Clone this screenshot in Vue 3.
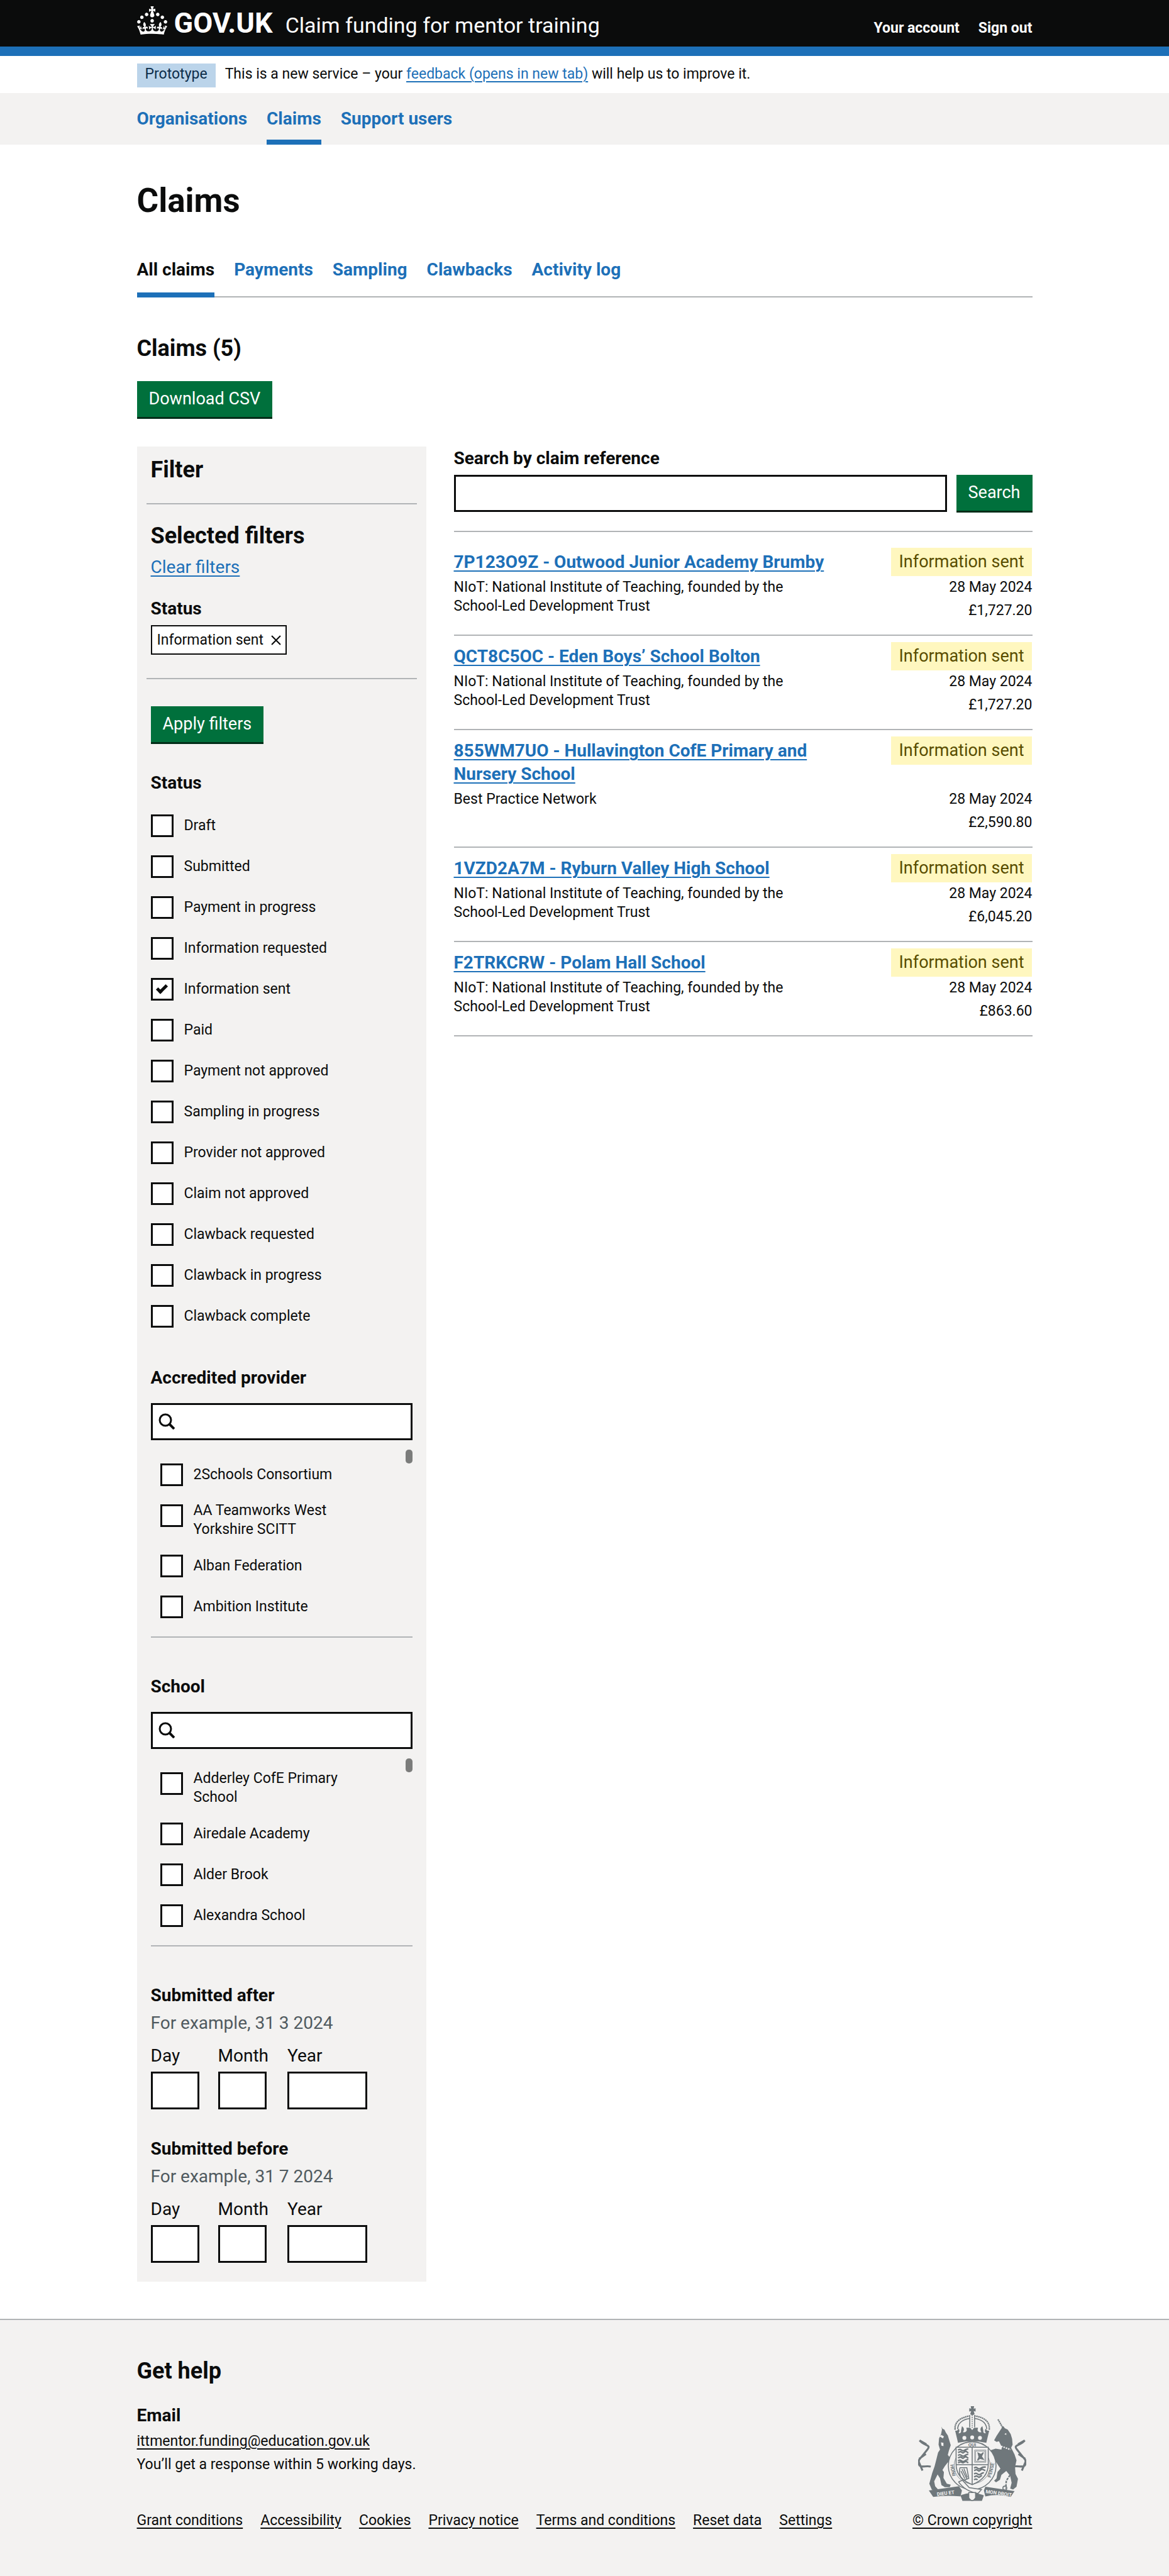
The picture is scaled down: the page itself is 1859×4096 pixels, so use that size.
<script setup>
import { ref } from 'vue'

const primaryLinks = [
  { text: 'Organisations' },
  { text: 'Claims', current: true },
  { text: 'Support users' },
]

const sections = [
  { text: 'All claims', current: true },
  { text: 'Payments' },
  { text: 'Sampling' },
  { text: 'Clawbacks' },
  { text: 'Activity log' },
]

const statuses = [
  'Draft',
  'Submitted',
  'Payment in progress',
  'Information requested',
  'Information sent',
  'Paid',
  'Payment not approved',
  'Sampling in progress',
  'Provider not approved',
  'Claim not approved',
  'Clawback requested',
  'Clawback in progress',
  'Clawback complete',
]
const selectedStatuses = ref(['Information sent'])

const searchableFilters = [
  {
    id: 'provider',
    title: 'Accredited provider',
    options: ['2Schools Consortium', 'AA Teamworks West Yorkshire SCITT', 'Alban Federation', 'Ambition Institute'],
  },
  {
    id: 'school',
    title: 'School',
    options: ['Adderley CofE Primary School', 'Airedale Academy', 'Alder Brook', 'Alexandra School'],
  },
]

const dateFilters = [
  { id: 'after', title: 'Submitted after', hint: 'For example, 31 3 2024' },
  { id: 'before', title: 'Submitted before', hint: 'For example, 31 7 2024' },
]
const dateParts = ['Day', 'Month', 'Year']

const niot = 'NIoT: National Institute of Teaching, founded by the School-Led Development Trust'
const claims = [
  { title: '7P123O9Z - Outwood Junior Academy Brumby', provider: niot, amount: '£1,727.20' },
  { title: 'QCT8C5OC - Eden Boys’ School Bolton', provider: niot, amount: '£1,727.20' },
  { title: '855WM7UO - Hullavington CofE Primary and Nursery School', provider: 'Best Practice Network', amount: '£2,590.80' },
  { title: '1VZD2A7M - Ryburn Valley High School', provider: niot, amount: '£6,045.20' },
  { title: 'F2TRKCRW - Polam Hall School', provider: niot, amount: '£863.60' },
]

const footerLinks = [
  'Grant conditions',
  'Accessibility',
  'Cookies',
  'Privacy notice',
  'Terms and conditions',
  'Reset data',
  'Settings',
]
</script>

<template>
  <div class="page">
    <header class="header">
      <div class="container header-row">
        <a href="#" class="logo">
          <svg class="crown" viewBox="0 0 32 30" fill="currentColor" aria-hidden="true">
            <path d="M22.6 10.4c-1 .4-2-.1-2.4-1-.4-.9.1-2 1-2.4.9-.4 2 .1 2.4 1s-.1 2-1 2.4m-5.9 6.7c-.9.4-2-.1-2.4-1-.4-.9.1-2 1-2.4.9-.4 2 .1 2.4 1s-.1 2-1 2.4m10.8-3.7c-1 .4-2-.1-2.4-1-.4-.9.1-2 1-2.4.9-.4 2 .1 2.4 1s0 2-1 2.4m3.3 4.8c-1 .4-2-.1-2.4-1-.4-.9.1-2 1-2.4.9-.4 2 .1 2.4 1s-.1 2-1 2.4M17 4.7l2.3 1.2V2.5l-2.3.7-.2-.2.9-3h-3.4l.9 3-.2.2c-.1.1-2.3-.7-2.3-.7v3.4L15 4.7c.1.1.1.2.2.2l-1.3 4c-.1.2-.1.4-.1.6 0 1.1.8 2 1.9 2.2h.7c1-.2 1.9-1.1 1.9-2.1 0-.2 0-.4-.1-.6l-1.3-4c-.1-.2 0-.2.1-.3m-7.6 5.7c.9.4 2-.1 2.4-1 .4-.9-.1-2-1-2.4-.9-.4-2 .1-2.4 1s0 2 1 2.4m-5 3c.9.4 2-.1 2.4-1 .4-.9-.1-2-1-2.4-.9-.4-2 .1-2.4 1s.1 2 1 2.4m-3.2 4.8c.9.4 2-.1 2.4-1 .4-.9-.1-2-1-2.4-.9-.4-2 .1-2.4 1s0 2 1 2.4m14.8 11c4.4 0 8.6.3 12.3.8 1.1-4.5 2.4-7 3.7-8.8l-2.5-.9c.2 1.3.3 1.9 0 2.7-.4-.4-.8-1.1-1.1-2.3l-1.2 4c.7-.5 1.3-.8 2-.9-1.1 2.5-2.6 3.1-3.5 3-1.1-.2-1.7-1.2-1.5-2.1.3-1.2 1.5-1.5 2.1-.1 1.1-2.3-.8-3-2-2.3 1.9-1.9 2.1-3.5.6-5.6-2.1 1.6-2.1 3.2-1.2 5.5-1.2-1.4-3.2-.6-2.5 1.6.9-1.4 2.1-.5 1.9.8-.2 1.1-1.7 2.1-3.5 1.9-2.7-.2-2.9-2.1-2.9-3.6.7-.1 1.9.5 2.9 1.9l.4-4.3c-1.1 1.1-2.1 1.4-3.2 1.4.4-1.2 2.1-3 2.1-3h-5.4s1.7 1.9 2.1 3c-1.1 0-2.1-.2-3.2-1.4l.4 4.3c1-1.4 2.2-2 2.9-1.9-.1 1.5-.2 3.4-2.9 3.6-1.9.2-3.4-.8-3.5-1.9-.2-1.3 1-2.2 1.9-.8.7-2.3-1.2-3-2.5-1.6.9-2.2.9-3.9-1.2-5.5-1.5 2-1.3 3.7.6 5.6-1.2-.7-3.1 0-2 2.3.6-1.4 1.8-1.1 2.1.1.2.9-.3 1.9-1.5 2.1-.9.2-2.4-.5-3.5-3 .6 0 1.2.3 2 .9l-1.2-4c-.3 1.1-.7 1.9-1.1 2.3-.3-.8-.2-1.4 0-2.7l-2.9.9C1.3 23 2.6 25.5 3.7 30c3.7-.5 7.9-.8 12.3-.8z" />
          </svg>
          <span class="logo-text">GOV.UK</span>
        </a>
        <a href="#" class="service">Claim funding for mentor training</a>
        <nav class="account" aria-label="Account">
          <a href="#">Your account</a>
          <a href="#">Sign out</a>
        </nav>
      </div>
    </header>

    <div class="container phase">
      <strong class="phase-tag">Prototype</strong>
      <span>This is a new service – your <a href="#" class="link">feedback (opens in new tab)</a> will help us to improve it.</span>
    </div>

    <nav class="primary" aria-label="Primary">
      <ul class="container tabs">
        <li v-for="link in primaryLinks" :key="link.text">
          <a href="#" class="tab primary-tab" :class="{ current: link.current }">{{ link.text }}</a>
        </li>
      </ul>
    </nav>

    <main class="container main">
      <h1>Claims</h1>

      <nav aria-label="Claims sections">
        <ul class="tabs sections">
          <li v-for="section in sections" :key="section.text">
            <a href="#" class="tab section-tab" :class="{ current: section.current }">{{ section.text }}</a>
          </li>
        </ul>
      </nav>

      <h2 class="heading count">Claims (5)</h2>
      <button type="button" class="button">Download CSV</button>

      <div class="columns">
        <form class="filter" @submit.prevent>
          <h2 class="heading">Filter</h2>

          <div class="selected">
            <h2 class="heading">Selected filters</h2>
            <a href="#" class="link clear">Clear filters</a>
            <h3 class="label selected-title">Status</h3>
            <a href="#" class="chip">
              Information sent
              <svg viewBox="0 0 15 15" class="cross" aria-hidden="true">
                <path d="M1 1 14 14M14 1 1 14" fill="none" stroke="currentColor" stroke-width="2" />
              </svg>
            </a>
          </div>

          <button type="submit" class="button">Apply filters</button>

          <fieldset class="group status-group">
            <legend class="label">Status</legend>
            <div class="options">
              <label v-for="status in statuses" :key="status" class="option">
                <input v-model="selectedStatuses" type="checkbox" :value="status" />
                <span>{{ status }}</span>
              </label>
            </div>
          </fieldset>

          <fieldset v-for="filter in searchableFilters" :key="filter.id" class="group search-group">
            <legend class="label">{{ filter.title }}</legend>
            <div class="search-box">
              <svg viewBox="0 0 26 26" class="magnifier" aria-hidden="true">
                <circle cx="11" cy="11" r="9" fill="none" stroke="currentColor" stroke-width="3" />
                <path d="m17 17 8 8" fill="none" stroke="currentColor" stroke-width="4" />
              </svg>
              <input type="search" class="input" :aria-label="`Search ${filter.title}`" />
            </div>
            <div class="scroller">
              <label v-for="option in filter.options" :key="option" class="option">
                <input type="checkbox" :value="option" />
                <span>{{ option }}</span>
              </label>
            </div>
          </fieldset>

          <fieldset v-for="date in dateFilters" :key="date.id" class="group date-group">
            <legend class="label">{{ date.title }}</legend>
            <p class="hint">{{ date.hint }}</p>
            <div class="date-fields">
              <div v-for="part in dateParts" :key="part">
                <label class="date-label" :for="`${date.id}-${part}`">{{ part }}</label>
                <input :id="`${date.id}-${part}`" type="text" inputmode="numeric" class="input date-input" :class="{ year: part === 'Year' }" />
              </div>
            </div>
          </fieldset>
        </form>

        <div class="results">
          <form @submit.prevent>
            <label class="label" for="reference">Search by claim reference</label>
            <div class="search-row">
              <input id="reference" type="text" class="input" />
              <button type="submit" class="button">Search</button>
            </div>
          </form>

          <ul class="claims">
            <li v-for="claim in claims" :key="claim.title" class="claim">
              <h3 class="claim-title"><a href="#" class="link">{{ claim.title }}</a></h3>
              <strong class="tag">Information sent</strong>
              <p class="provider">{{ claim.provider }}</p>
              <p class="figures">28 May 2024<br />{{ claim.amount }}</p>
            </li>
          </ul>
        </div>
      </div>
    </main>

    <footer class="footer">
      <div class="container footer-row">
        <div>
          <h2 class="heading">Get help</h2>
          <h3 class="label email">Email</h3>
          <p><a href="#">ittmentor.funding@education.gov.uk</a></p>
          <p>You’ll get a response within 5 working days.</p>
          <ul class="footer-links">
            <li v-for="link in footerLinks" :key="link"><a href="#">{{ link }}</a></li>
          </ul>
        </div>
        <div class="copyright">
          <svg class="arms" viewBox="0 0 222 196" aria-hidden="true">
            <g fill="currentColor">
              <path d="M108 0h7l-1 5 4-1v7l-4-1 2 6a6 6 0 0 1-9 0l2-6-4 1V4l4 1z" />
              <path d="M76 50c4 1 6-1 7-4 3 3 2 7 0 9 3 1 6-1 5-4l2-10c5 4 5 8 2 12 4 1 7 0 8-4l-1-5h8l4 5 4-5h8l-1 5c1 4 4 5 8 4-3-4-3-8 2-12l2 10c-1 3 2 5 5 4-2-2-3-6 0-9 1 3 3 5 7 4l-6 25q-29-6-58 0z" />
              <path d="M48 42l2 4 4 2 3 6 4 6 3 10 3 10-4 12-2 8 5 6 9 8 5 4-4 4-7-2-8-5-6 8-5 8 3 4-1 12 7 12 8 2-2 5h-10l-7-4-3-14-5-8-7 14 2 10 7 8-5 3-9-4-5-12 6-22 5-14 4-16 3-12 4-6-3-10 1-13 4-8 2-10z" />
              <path d="m172 44 3-3 3 4 6 3 6 9 3 10 1 12-3 6 7 14 4 12-3 14 1 14 5 10-3 16-7 6-6-2 3-12-3-14-8-10-10 8-3 10-8 5-4-3 5-5 2-13 6-7-10-15-8-12-8 1-1-4 8-8 9-3 12 2 1-5-6-12-5 1-5-3 5-9z" />
              <path d="m22 173 62-9 6 9-3 12q-30-3-56 1zM138 165l60 9-8 12q-26-7-52-1l-3-12z" />
              <path d="M87 183q24-10 48 0l-4 11H91z" />
            </g>
            <g fill="none" stroke="currentColor">
              <path d="M76 48C74 30 90 23 105 20M146 48c2-18-12-25-29-28" stroke-width="3" stroke-dasharray="3 1" />
              <path d="M81 47c1-14 11-20 25-22M141 47c-1-14-11-20-25-22M106 18v25M116 18v25" stroke-width="2" />
              <path d="M111 18v26" stroke-width="2" stroke-dasharray="2 2" />
              <path d="M26 124C14 120-2 132 2 110l17-21C28 78 12 82 3 70m0 0 14 8m-1 20-14 10m-1 5 8 19" stroke-width="4" />
              <path d="M195 124c12-4 29 8 25-14l-17-21c-9-11 7-7 16-19m0 0-14 8m1 20 14 10m1 5-8 19" stroke-width="4" />
              <path d="m164 27 11 19" stroke-width="3" stroke-dasharray="3 1" />
              <path d="m195 101 2 18-7 20-9 14-1 16" stroke-width="3" stroke-dasharray="5 2" />
              <circle cx="178" cy="168" r="4" stroke-width="2" />
            </g>
            <circle cx="111" cy="122" r="49" fill="#f3f2f1" stroke="currentColor" stroke-width="2" />
            <circle cx="111" cy="122" r="37" fill="none" stroke="currentColor" />
            <path d="M78 84h66v35q0 29-33 42-33-13-33-42z" fill="#f3f2f1" stroke="currentColor" stroke-width="2" />
            <g fill="none" stroke="currentColor">
              <path d="M111 84v76M78 120h66" stroke-width="2" />
              <path d="M82 90q4-3 7 0t7 0 7-2M82 95l5-2 5 3 6-4 5 4M82 101q4-3 7 0t7 0 7-2M82 106l5-2 5 3 6-4 5 4M82 112q4-3 7 0t7 0 7-2M82 116l5-2 5 2 6-3 5 3" stroke-width="3" />
              <path d="M116 90h23v25h-23zM118 92h19v21h-19z" />
              <path d="m123 96 6 3 5-4-4 8 4 6-7-2-5 4 3-7z" stroke-width="2" fill="currentColor" />
              <path d="M86 126h14l4 22-10 4q-12-8-8-26M90 129l10 20M94 128l7 18M88 133l8 16" stroke-width="2" />
              <path d="M115 127q4-3 7 0t7 0 10-2M115 132l5-2 5 3 6-4 7 3M115 139q4-3 7 0t7 0 6-2M115 145l5-2 5 3 6-4M115 151q4-3 7 0" stroke-width="3" />
            </g>
            <path d="m83 155 8-3 14 15 25 4-7 8q-28-5-40-24M104 177h14v11q-7 11-14 0z" fill="#f3f2f1" stroke="currentColor" stroke-width="2" />
            <g fill="#f3f2f1">
              <path d="m44 62 4-3 5 3-2 4zM47 74l5 1v7l-4-1zM177 57l4-2v4z" />
              <circle cx="95" cy="65" r="4" />
              <circle cx="111" cy="64" r="4" />
              <circle cx="127" cy="65" r="4" />
            </g>
            <path d="m161 79 12 4 17 6" fill="none" stroke="#f3f2f1" stroke-width="3" stroke-dasharray="3 2" />
            <g class="motto" text-anchor="middle">
              <text x="57" y="182" fill="#f3f2f1" transform="rotate(-7 57 182)">DIEU ET</text>
              <text x="165" y="182" fill="#f3f2f1" transform="rotate(8 165 182)">MON DROIT</text>
              <text x="111" y="82" fill="currentColor">QUI</text>
              <text x="68" y="132" fill="currentColor" transform="rotate(80 68 132)">HONI</text>
              <text x="153" y="132" fill="currentColor" transform="rotate(-76 153 132)">PENSE</text>
            </g>
          </svg>
          <a href="#">© Crown copyright</a>
        </div>
      </div>
    </footer>
  </div>
</template>

<style>
body {
  background: #fff;
}
</style>

<style scoped>
.page {
  color: #0b0c0c;
  font-family: Roboto, "Liberation Sans", sans-serif;
  font-size: 23px;
  line-height: 37px;
}

h1,
h2,
h3,
p,
ul,
fieldset {
  margin: 0;
  padding: 0;
}

ul {
  list-style: none;
}

a {
  color: inherit;
  text-decoration-thickness: 2px;
  text-underline-offset: 4px;
}

.container {
  box-sizing: border-box;
  max-width: 1424px;
  margin: 0 auto;
}

.link {
  color: #1d70b8;
}

.header {
  background: #0b0c0c;
  border-bottom: 15px solid #1d70b8;
  color: #fff;
}

.header a {
  text-decoration: none;
}

.header-row {
  display: flex;
  align-items: baseline;
}

.logo {
  display: flex;
  align-items: baseline;
  gap: 11px;
}

.crown {
  align-self: flex-start;
  width: 48px;
  height: 45px;
  margin-top: 10px;
}

.logo-text {
  font-size: 45px;
  font-weight: 700;
  line-height: 74px;
}

.service {
  margin-left: 20px;
  font-size: 34px;
}

.account {
  display: flex;
  gap: 30px;
  margin-left: auto;
  font-weight: 700;
}

.phase {
  display: flex;
  align-items: baseline;
  gap: 15px;
  padding: 12px 0 9px;
  line-height: 34px;
}

.phase-tag {
  padding: 0 13px 4px;
  background: #bbd4ea;
  color: #0c2d4a;
  font-weight: 400;
}

.primary {
  background: #f3f2f1;
}

.tabs {
  display: flex;
  gap: 31px;
  font-size: 28px;
  font-weight: 700;
}

.tab {
  display: block;
  border-bottom: 8px solid transparent;
  color: #1d70b8;
  text-decoration: none;
}

.tab.current {
  border-color: #1d70b8;
}

.primary-tab {
  padding: 22px 0 15px;
}

.section-tab {
  margin-bottom: -2px;
  padding-bottom: 18px;
}

.section-tab.current {
  color: #0b0c0c;
}

.sections {
  border-bottom: 2px solid #b1b4b6;
}

.main {
  padding: 59px 0;
}

h1 {
  margin-bottom: 61px;
  font-size: 53px;
  line-height: 60px;
}

.heading {
  font-size: 36px;
  line-height: 44px;
}

.count {
  margin: 59px 0 30px;
}

.button {
  display: block;
  height: 57px;
  margin: 0;
  padding: 0 19px;
  border: 0;
  background: #00703c;
  box-shadow: 0 3px 0 #002d18;
  color: #fff;
  font: inherit;
  font-size: 27px;
}

.columns {
  display: grid;
  grid-template-columns: 1fr 2fr;
  align-items: start;
  gap: 44px;
  margin-top: 47px;
}

.filter {
  padding: 15px 22px 30px;
  background: #f3f2f1;
}

.selected {
  margin: 31px -7px 43px;
  padding: 28px 7px 37px;
  border: solid #b1b4b6;
  border-width: 2px 0;
}

.clear {
  display: block;
  width: max-content;
  margin-top: 9px;
  font-size: 28px;
}

.label {
  display: block;
  padding: 0;
  font-size: 28px;
  font-weight: 700;
  line-height: 37px;
}

.selected-title {
  margin: 29px 0 8px;
}

.chip {
  display: flex;
  align-items: center;
  gap: 12px;
  box-sizing: border-box;
  width: max-content;
  height: 47px;
  padding: 0 7px 0 8px;
  border: 2px solid #0b0c0c;
  background: #fff;
  text-decoration: none;
}

.cross {
  width: 16px;
  height: 16px;
}

.group {
  min-width: 0;
  border: 0;
}

.status-group {
  margin-top: 46px;
}

.options {
  margin-top: 17px;
}

.option {
  display: flex;
  align-items: flex-start;
  gap: 17px;
}

.option span {
  display: flex;
  align-items: center;
  box-sizing: border-box;
  min-height: 65px;
  max-width: 330px;
  padding: 10px 0;
  line-height: 30px;
}

.option input {
  display: grid;
  flex: none;
  place-items: center;
  appearance: none;
  box-sizing: border-box;
  width: 36px;
  height: 36px;
  margin: 15px 0 0;
  border: 3px solid #0b0c0c;
  background: #fff;
}

.option input:checked::before {
  content: "";
  box-sizing: border-box;
  width: 17px;
  height: 10px;
  margin-bottom: 5px;
  border: solid #0b0c0c;
  border-width: 0 0 5px 5px;
  transform: rotate(-45deg);
}

.search-group {
  margin-top: 47px;
}

.search-group + .search-group {
  margin-top: 59px;
}

.search-box {
  position: relative;
  display: flex;
  margin-top: 22px;
}

.magnifier {
  position: absolute;
  top: 16px;
  left: 12px;
  width: 26px;
  height: 26px;
}

.input {
  box-sizing: border-box;
  width: 100%;
  height: 59px;
  margin: 0;
  padding: 7px;
  border: 3px solid #0b0c0c;
  border-radius: 0;
  appearance: none;
  background: #fff;
  font: inherit;
  font-size: 27px;
}

.search-box .input {
  padding-left: 50px;
}

.scroller {
  position: relative;
  margin-top: 14px;
  padding: 8px 75px 15px 15px;
  border-bottom: 2px solid #b1b4b6;
}

.scroller::after {
  content: "";
  position: absolute;
  top: 1px;
  right: 0;
  width: 11px;
  height: 22px;
  border-radius: 5px;
  background: #7b7c7b;
}

.date-group {
  margin-top: 44px;
}

.search-group + .date-group {
  margin-top: 59px;
}

.hint {
  margin: 7px 0 15px;
  color: #505a5f;
  font-size: 28px;
}

.date-fields {
  display: flex;
  gap: 30px;
}

.date-label {
  display: block;
  margin-bottom: 7px;
  font-size: 28px;
}

.date-input {
  display: block;
  width: 77px;
  height: 60px;
}

.date-input.year {
  width: 127px;
}

.search-row {
  display: flex;
  gap: 15px;
  margin-top: 8px;
}

.claims {
  margin-top: 30px;
  padding-top: 15px;
  border-top: 2px solid #b1b4b6;
}

.claim {
  display: grid;
  grid-template-columns: 2fr 1fr;
  row-gap: 3px;
  padding: 14px 0 20px;
  border-bottom: 2px solid #b1b4b6;
}

.claim-title {
  font-size: 28px;
}

.tag {
  justify-self: end;
  align-self: start;
  margin: -4px 0;
  padding: 4px 13px;
  background: #fff7bf;
  color: #594d00;
  font-size: 27px;
  font-weight: 400;
}

.provider {
  margin-top: 4px;
  max-width: 580px;
  line-height: 30px;
}

.figures {
  text-align: right;
}

.footer {
  padding: 59px 0 70px;
  border-top: 2px solid #b1b4b6;
  background: #f3f2f1;
}

.footer-row {
  display: flex;
  align-items: flex-end;
  justify-content: space-between;
}

.email {
  margin: 30px 0 4px;
}

.footer-links {
  display: flex;
  gap: 28px;
  margin-top: 52px;
}

.copyright {
  display: flex;
  flex-direction: column;
  align-items: center;
  gap: 11px;
}

.arms {
  width: 172px;
  height: 152px;
  color: #6f777b;
}

.motto {
  font-size: 10px;
  font-weight: 700;
}
</style>
